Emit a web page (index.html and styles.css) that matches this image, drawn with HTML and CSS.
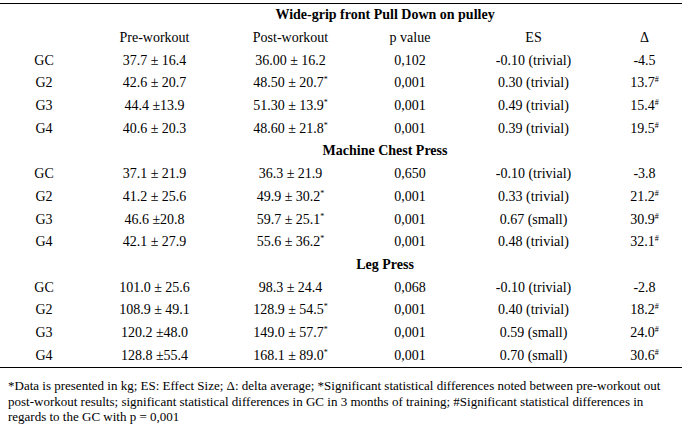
FILE: index.html
```html
<!DOCTYPE html>
<html lang="en">
<head>
<meta charset="utf-8">
<title>Pull Down, Chest Press and Leg Press results</title>
<link rel="stylesheet" href="styles.css">
</head>
<body>
<table class="data">
  <colgroup>
    <col class="c-group">
    <col class="c-pre">
    <col class="c-post">
    <col class="c-p">
    <col class="c-es">
    <col class="c-delta">
  </colgroup>
  <tbody>
    <tr class="section"><td></td><td colspan="5">Wide-grip front Pull Down on pulley</td></tr>
    <tr><td></td><td>Pre-workout</td><td>Post-workout</td><td>p value</td><td>ES</td><td>Δ</td></tr>
    <tr><td>GC</td><td>37.7 ± 16.4</td><td>36.00 ± 16.2</td><td>0,102</td><td>-0.10 (trivial)</td><td>-4.5</td></tr>
    <tr><td>G2</td><td>42.6 ± 20.7</td><td>48.50 ± 20.7<sup>*</sup></td><td>0,001</td><td>0.30 (trivial)</td><td>13.7<sup>#</sup></td></tr>
    <tr><td>G3</td><td>44.4 ±13.9</td><td>51.30 ± 13.9<sup>*</sup></td><td>0,001</td><td>0.49 (trivial)</td><td>15.4<sup>#</sup></td></tr>
    <tr><td>G4</td><td>40.6 ± 20.3</td><td>48.60 ± 21.8<sup>*</sup></td><td>0,001</td><td>0.39 (trivial)</td><td>19.5<sup>#</sup></td></tr>
    <tr class="section"><td></td><td colspan="5">Machine Chest Press</td></tr>
    <tr><td>GC</td><td>37.1 ± 21.9</td><td>36.3 ± 21.9</td><td>0,650</td><td>-0.10 (trivial)</td><td>-3.8</td></tr>
    <tr><td>G2</td><td>41.2 ± 25.6</td><td>49.9 ± 30.2<sup>*</sup></td><td>0,001</td><td>0.33 (trivial)</td><td>21.2<sup>#</sup></td></tr>
    <tr><td>G3</td><td>46.6 ±20.8</td><td>59.7 ± 25.1<sup>*</sup></td><td>0,001</td><td>0.67 (small)</td><td>30.9<sup>#</sup></td></tr>
    <tr><td>G4</td><td>42.1 ± 27.9</td><td>55.6 ± 36.2<sup>*</sup></td><td>0,001</td><td>0.48 (trivial)</td><td>32.1<sup>#</sup></td></tr>
    <tr class="section"><td></td><td colspan="5">Leg Press</td></tr>
    <tr><td>GC</td><td>101.0 ± 25.6</td><td>98.3 ± 24.4</td><td>0,068</td><td>-0.10 (trivial)</td><td>-2.8</td></tr>
    <tr><td>G2</td><td>108.9 ± 49.1</td><td>128.9 ± 54.5<sup>*</sup></td><td>0,001</td><td>0.40 (trivial)</td><td>18.2<sup>#</sup></td></tr>
    <tr><td>G3</td><td>120.2 ±48.0</td><td>149.0 ± 57.7<sup>*</sup></td><td>0,001</td><td>0.59 (small)</td><td>24.0<sup>#</sup></td></tr>
    <tr><td>G4</td><td>128.8 ±55.4</td><td>168.1 ± 89.0<sup>*</sup></td><td>0,001</td><td>0.70 (small)</td><td>30.6<sup>#</sup></td></tr>
  </tbody>
</table>
<p class="note">*Data is presented in kg; ES: Effect Size; Δ: delta average; *Significant statistical differences noted between pre-workout out<br>post-workout results; significant statistical differences in GC in 3 months of training; #Significant statistical differences in<br>regards to the GC with p = 0,001</p>
</body>
</html>
```

FILE: styles.css
```css
html, body {
  margin: 0;
  padding: 0;
  background: #ffffff;
  color: #000000;
}

body {
  font-family: "Liberation Serif", "Times New Roman", serif;
  font-size: 14px;
}

.data {
  width: 682px;
  margin-top: 3px;
  border-collapse: collapse;
  table-layout: fixed;
  border-top: 1px solid #000;
  border-bottom: 1px solid #000;
}

.c-group { width: 88px; }
.c-pre { width: 133px; }
.c-post { width: 139px; }
.c-p { width: 100px; }
.c-es { width: 147px; }
.c-delta { width: 75px; }

.data td {
  height: 22.7px;
  padding: 0;
  text-align: center;
  vertical-align: middle;
  line-height: 16px;
  white-space: nowrap;
}

.data .section td {
  font-weight: bold;
}

.data sup {
  font-size: 8px;
  line-height: 0;
  vertical-align: 5px;
}

.note {
  margin: 10px 0 0 0;
  padding-left: 8px;
  font-size: 13px;
  line-height: 15.5px;
  white-space: nowrap;
}
```
